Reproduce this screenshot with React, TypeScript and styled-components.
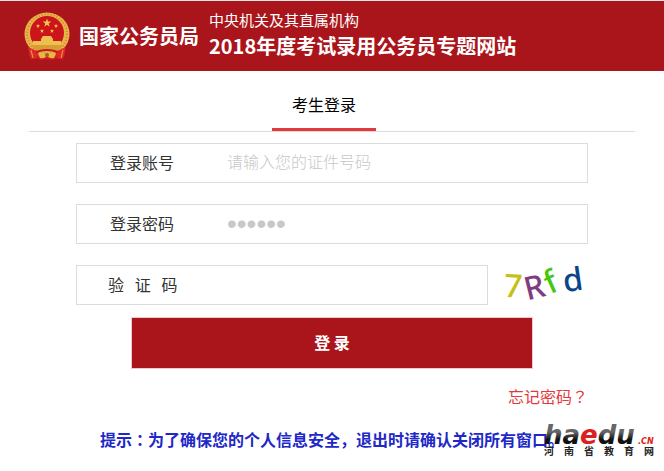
import React from "react";
import styled, { createGlobalStyle } from "styled-components";

const GlobalStyle = createGlobalStyle`
  * { box-sizing: border-box; }
  body {
    margin: 0;
    background: #fff;
    color: #333;
    font: 16px/22px "Noto Sans CJK SC", sans-serif;
  }
  input, button { font: inherit; }
`;

const Header = styled.header`
  display: flex;
  align-items: center;
  height: 71px;
  padding: 0 24px;
  border-top: 1px solid #e6e6e6;
  background: #aa151b;
  color: #fff;
`;

const Emblem = styled.svg`
  flex: none;
  width: 46px;
  height: 50px;
  margin-top: 2px;
`;

const Bureau = styled.strong`
  margin-left: 9px;
  font-size: 20px;
  font-weight: 700;
  white-space: nowrap;
`;

const Titles = styled.div`
  margin-left: 10px;
  padding-bottom: 4px;
  white-space: nowrap;
`;

const Department = styled.p`
  margin: 0;
  font-size: 15px;
  line-height: 24px;
  font-weight: 400;
`;

const SiteName = styled.h1`
  margin: 0;
  font-size: 20px;
  line-height: 28px;
  font-weight: 700;
`;

const Tabs = styled.nav`
  display: flex;
  justify-content: center;
  height: 61px;
  margin: 0 29px;
  padding-right: 16px;
  border-bottom: 1px solid #dcdcdc;
`;

const Tab = styled.a`
  width: 104px;
  padding-top: 22px;
  border-bottom: 3px solid #e4393c;
  color: #000;
  text-align: center;
  text-decoration: none;
`;

const Form = styled.form`
  display: flex;
  flex-direction: column;
  margin: 11px 76px 0;
`;

const Row = styled.div`
  display: flex;
  margin-bottom: 21px;
`;

const Field = styled.div`
  display: flex;
  flex: 1;
  align-items: center;
  min-width: 0;
  height: 40px;
  border: 1px solid #dcdcdc;
`;

const Label = styled.label<{ $spread?: boolean }>`
  flex: none;
  width: 150px;
  padding-bottom: 2px;
  padding-left: ${(p) => (p.$spread ? 31 : 33)}px;
  white-space: pre;
`;

const Input = styled.input`
  flex: 1;
  min-width: 0;
  height: 38px;
  padding: 0 0 4px;
  border: 0;
  outline: 0;
  background: transparent;
  color: #333;
  &::placeholder {
    color: #c8c8c8;
    font-weight: 300;
    opacity: 1;
  }
`;

const PasswordInput = styled(Input)`
  padding: 0;
  color: #c8c8c8;
  font-family: "Liberation Sans", sans-serif;
  font-size: 28px;
`;

const Captcha = styled.svg`
  flex: none;
  width: 100px;
  height: 40px;
  overflow: visible;
  font: 500 32px "Noto Sans", sans-serif;
`;

const Submit = styled.button`
  align-self: center;
  width: 402px;
  max-width: 100%;
  height: 52px;
  margin-top: -9px;
  padding-bottom: 4px;
  border: 1px solid #f0c8ca;
  background: #aa151b;
  color: #fff;
  font-weight: 700;
  cursor: pointer;
`;

const Forgot = styled.a`
  align-self: flex-end;
  margin-top: 16px;
  color: #e4393c;
  text-decoration: none;
`;

const CenteredMark = styled.span`
  font-family: "Noto Sans CJK TC", sans-serif;
`;

const Footer = styled.footer`
  position: relative;
  margin-top: 21px;
  padding: 0 0 20px 100px;
`;

const Notice = styled.p`
  margin: 0;
  color: #2128c8;
  font-weight: 700;
  white-space: nowrap;
`;

const Watermark = styled.div`
  position: absolute;
  top: 0;
  right: 10px;
  width: 110px;
  color: #222;
`;

const Wordmark = styled.svg`
  display: block;
  width: 110px;
  height: 16px;
  overflow: visible;
  font: italic 700 26px "DejaVu Sans", sans-serif;
`;

const Suffix = styled.text`
  font-size: 8px;
`;

const WatermarkName = styled.div`
  display: flex;
  justify-content: space-between;
  font-size: 10px;
  line-height: 14px;
  font-weight: 700;
`;

const star = (x: number, y: number, r: number) =>
  Array.from({ length: 10 }, (_, i) => {
    const a = (Math.PI * i) / 5 - Math.PI / 2;
    const d = i % 2 ? r * 0.4 : r;
    return `${x + d * Math.cos(a)},${y + d * Math.sin(a)}`;
  }).join(" ");

const stars = [
  [23, 11, 4.5],
  [14, 14, 2.2],
  [32, 14, 2.2],
  [18, 19, 2.2],
  [28, 19, 2.2],
];

function NationalEmblem() {
  return (
    <Emblem viewBox="0 0 46 50" role="img" aria-label="国徽">
      <path d="M5 32L7 48L12 46L17 48L23 47L29 48L34 46L39 48L41 32Z" fill="#d51c20" />
      <ellipse cx="23" cy="22" rx="22.5" ry="21.5" fill="#e9b44a" />
      <ellipse cx="23" cy="22" rx="20" ry="19.5" fill="none" stroke="#c98a2a" strokeWidth="2" strokeDasharray="1 2" />
      <ellipse cx="23" cy="21" rx="17" ry="17" fill="#cb151b" />
      {stars.map(([x, y, r]) => (
        <polygon key={`${x}-${y}`} points={star(x, y, r)} fill="#f3c64b" />
      ))}
      <path d="M17 27L19 24H27L29 27V29H37V33H9V29H17Z" fill="#edc052" />
      <path d="M7 33H39L35 38H11Z" fill="#d99d34" />
      <path d="M4 35L15 40L12 47L6 45ZM42 35L31 40L34 47L40 45Z" fill="#df272a" />
      <path d="M12 40Q23 36 34 40" fill="none" stroke="#c51b1d" strokeWidth="2" />
      <path d="M14 42Q18 39 23 43Q28 39 32 42L30 46Q26 47 23 44Q20 47 16 46Z" fill="#e7b744" />
      <circle cx="23" cy="43" r="2" fill="#af5b1c" />
      <path d="M7 38L9 46M39 38L37 46" stroke="#e5a83a" />
    </Emblem>
  );
}

export default function App() {
  return (
    <>
      <GlobalStyle />
      <Header>
        <NationalEmblem />
        <Bureau>国家公务员局</Bureau>
        <Titles>
          <Department>中央机关及其直属机构</Department>
          <SiteName>2018年度考试录用公务员专题网站</SiteName>
        </Titles>
      </Header>
      <main>
        <Tabs>
          <Tab href="#login">考生登录</Tab>
        </Tabs>
        <Form id="login" onSubmit={(e: React.FormEvent) => e.preventDefault()}>
          <Row>
            <Field>
              <Label htmlFor="account">登录账号</Label>
              <Input id="account" placeholder="请输入您的证件号码" />
            </Field>
          </Row>
          <Row>
            <Field>
              <Label htmlFor="password">登录密码</Label>
              <PasswordInput id="password" type="password" defaultValue="123456" />
            </Field>
          </Row>
          <Row>
            <Field>
              <Label htmlFor="code" $spread>{"验   证   码"}</Label>
              <Input id="code" autoComplete="off" />
            </Field>
            <Captcha viewBox="0 0 100 40" role="img" aria-label="验证码图片">
              <text x="16" y="32" fill="#c8c010" transform="rotate(3 22 22)">7</text>
              <text x="36" y="34" fill="#803b83" transform="rotate(-14 44 22)">R</text>
              <text x="57" y="28" fill="#43c80b" transform="rotate(-24 63 17)">f</text>
              <text x="75" y="26" fill="#0b4588" transform="rotate(-8 84 16)">d</text>
            </Captcha>
          </Row>
          <Submit type="submit">登 录</Submit>
          <Forgot href="#forgot">
            忘记密码<CenteredMark lang="zh-TW">？</CenteredMark>
          </Forgot>
        </Form>
      </main>
      <Footer>
        <Notice>
          提示<CenteredMark lang="zh-TW">：</CenteredMark>
          为了确保您的个人信息安全，退出时请确认关闭所有窗口。
        </Notice>
        <Watermark>
          <Wordmark viewBox="0 0 110 16" role="img" aria-label="haedu.cn">
            <defs>
              <linearGradient id="ink" x1="0" y1="0" x2="0" y2="1">
                <stop offset="0.4" stopColor="#666" />
                <stop offset="0.65" stopColor="#111" />
              </linearGradient>
            </defs>
            <text x="0" y="16" fill="url(#ink)">
              ha<tspan fill="#dc2020">e</tspan>du
            </text>
            <Suffix x="94" y="16" fill="#dc2020">.CN</Suffix>
          </Wordmark>
          <WatermarkName>
            {Array.from("河南省教育网").map((c) => (
              <span key={c}>{c}</span>
            ))}
          </WatermarkName>
        </Watermark>
      </Footer>
    </>
  );
}
